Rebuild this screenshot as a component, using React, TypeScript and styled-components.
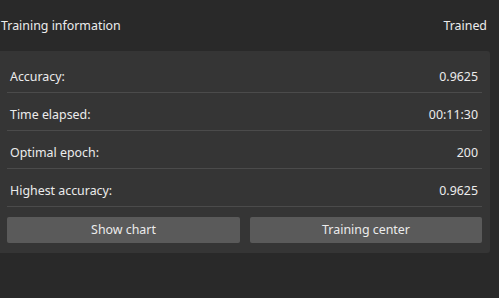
import React from "react";
import styled, { createGlobalStyle } from "styled-components";

const Global = createGlobalStyle`
  html, body { margin: 0; padding: 0; background: #292929; }
  body { font-family: "Noto Sans", "Open Sans", sans-serif; color: #e6e6e6; }
`;

const Page = styled.div`
  width: 499px;
  height: 298px;
  background: #292929;
`;

const Header = styled.div`
  height: 51px;
  display: flex;
  align-items: center;
  justify-content: space-between;
  padding: 0 12px 0 1px;
  box-sizing: border-box;
  font-size: 12.4px;
  line-height: 18px;
  color: #ececec;
`;

const Panel = styled.div`
  width: 490px;
  box-sizing: border-box;
  background: #353535;
  border-radius: 0 3px 3px 0;
  padding: 4px 8px 10px 7px;
`;

const Row = styled.div`
  display: flex;
  justify-content: space-between;
  padding: 13px 4px 6px 3px;
  font-size: 12.4px;
  line-height: 18px;
  border-bottom: 1px solid #4b4b4b;
  color: #ececec;
`;

const Buttons = styled.div`
  display: grid;
  grid-template-columns: 233px 232px;
  column-gap: 10px;
  margin-top: 10px;
`;

const Button = styled.button`
  height: 26px;
  border: none;
  border-radius: 2px;
  background: #5a5a5a;
  color: #ececec;
  font-family: "Noto Sans", "Open Sans", sans-serif;
  font-size: 12.4px;
  line-height: 18px;
  padding: 0;
  cursor: pointer;
`;

const rows: [string, string][] = [
  ["Accuracy:", "0.9625"],
  ["Time elapsed:", "00:11:30"],
  ["Optimal epoch:", "200"],
  ["Highest accuracy:", "0.9625"],
];

export default function App() {
  return (
    <Page>
      <Global />
      <Header>
        <span>Training information</span>
        <span>Trained</span>
      </Header>
      <Panel>
        {rows.map(([k, v]) => (
          <Row key={k}>
            <span>{k}</span>
            <span>{v}</span>
          </Row>
        ))}
        <Buttons>
          <Button>Show chart</Button>
          <Button>Training center</Button>
        </Buttons>
      </Panel>
    </Page>
  );
}
